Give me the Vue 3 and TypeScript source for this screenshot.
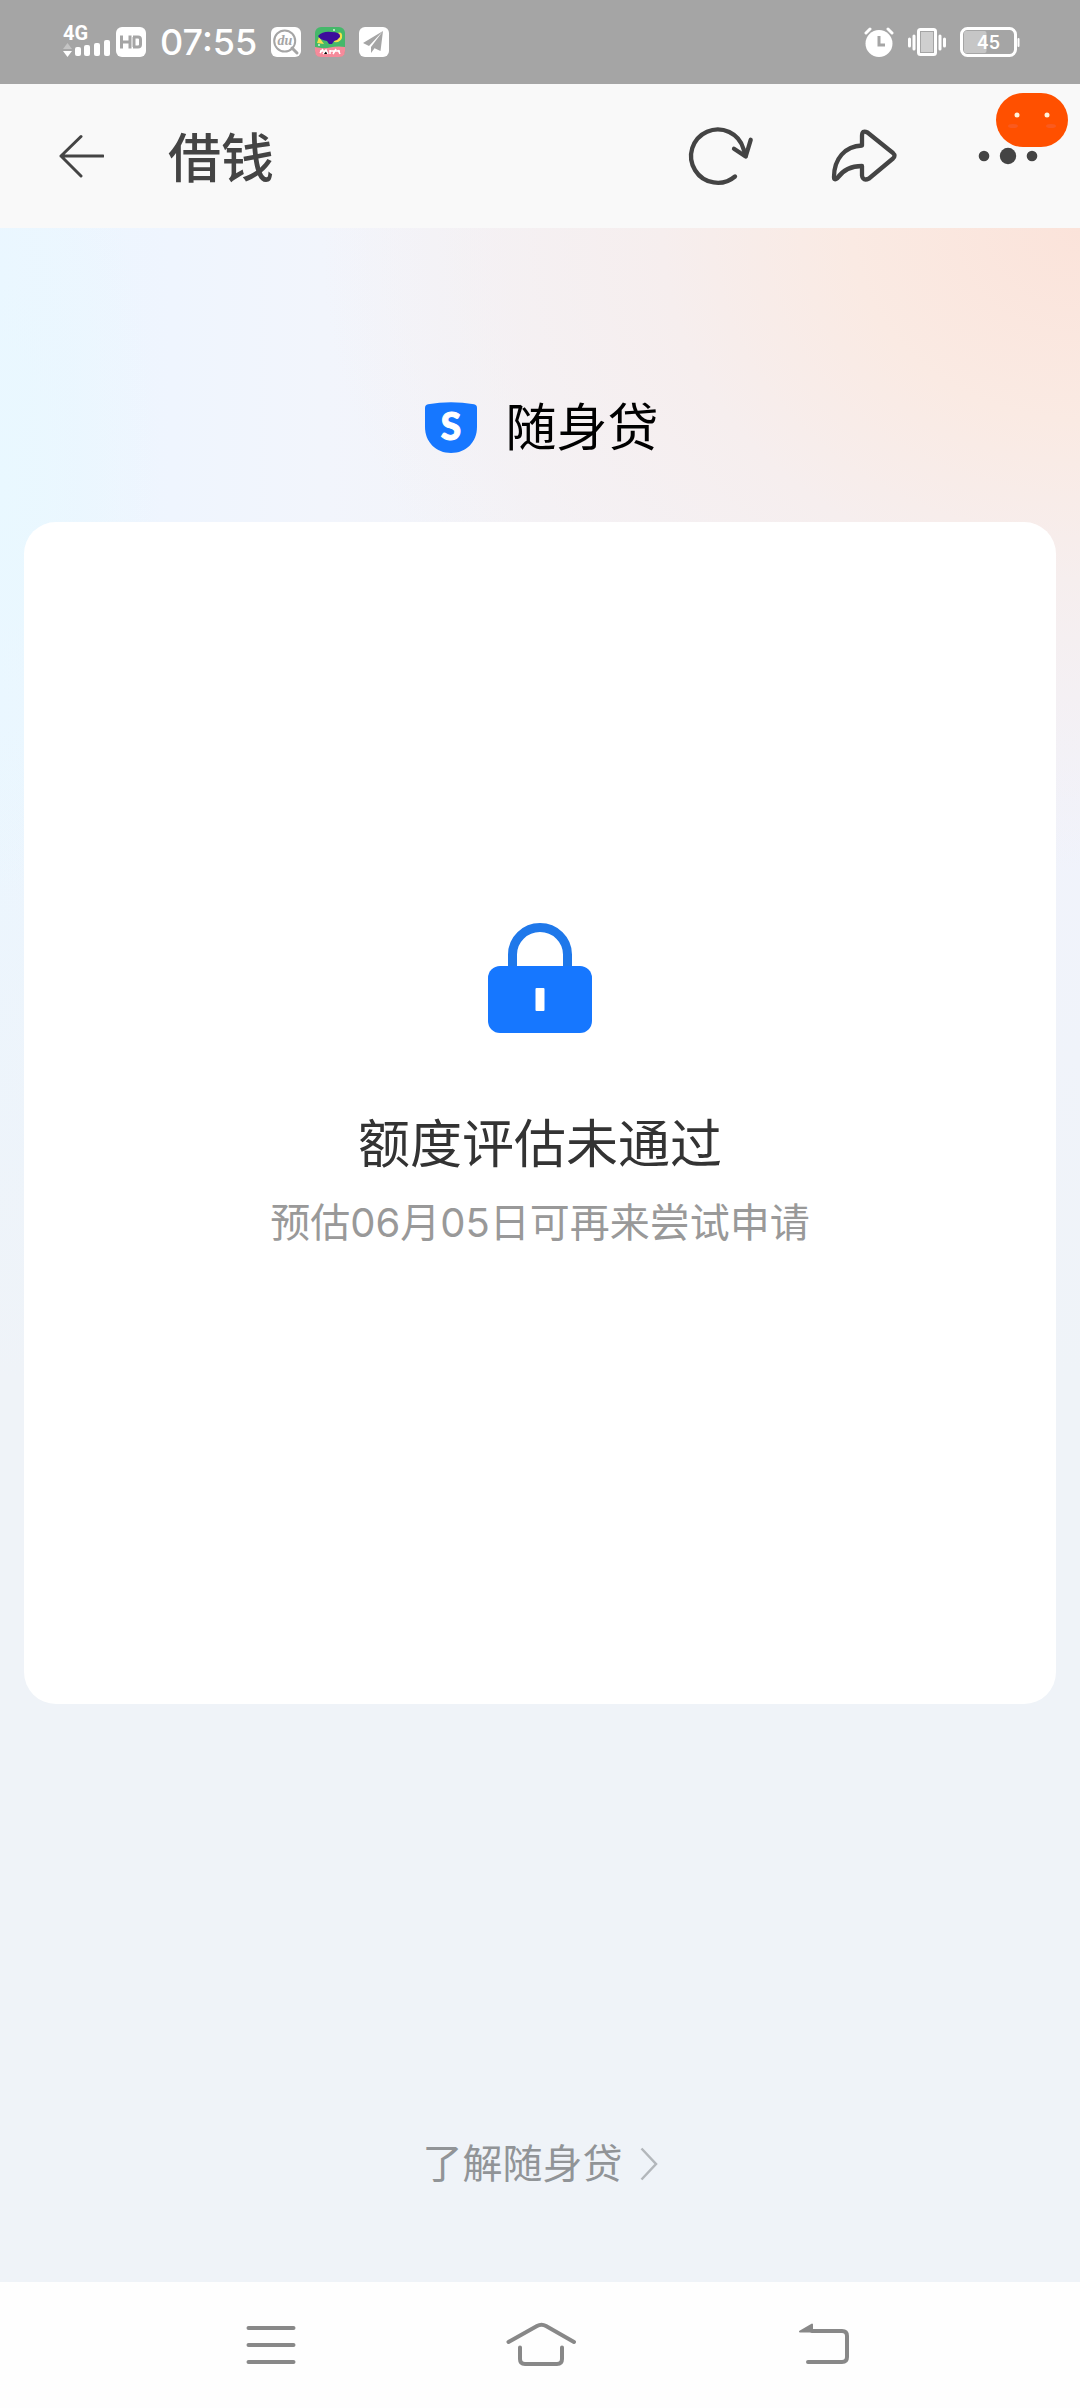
<script setup lang="ts">
import { ref } from 'vue'

const clock = ref('07:55')
const battery = ref(45)
const pageTitle = ref('借钱')
const brand = ref('随身贷')
const result = ref({
  title: '额度评估未通过',
  hint: '预估06月05日可再来尝试申请',
})
const bars = [
  { x: 13, y: 23 },
  { x: 22, y: 21 },
  { x: 32, y: 19 },
  { x: 42, y: 16 },
]
</script>

<template>
  <div class="screen">
    <div class="status">
      <div class="status-group">
        <div class="network">
          <svg class="signal" width="48" height="36" viewBox="0 0 48 36" aria-label="4G">
            <text class="net-type" x="1" y="16">4G</text>
            <path d="M1 25 L5.500 19 L10 25Z" fill="#c4c4c4" />
            <path d="M1 27 H10 L5.500 33Z" fill="#fff" />
            <rect v-for="b in bars" :key="b.x" :x="b.x" :y="b.y" width="6" :height="32 - b.y" rx="2" fill="#fff" />
          </svg>
          <svg width="30" height="30" viewBox="0 0 30 30" aria-label="HD">
            <rect width="30" height="30" rx="6" fill="#fff" />
            <path d="M5.500 8.500V21.500M14 8.500V21.500M5.500 15H14M18 10V20M17 10H22Q24.500 10 24.500 12.500V17.500Q24.500 20 22 20H17" fill="none" stroke="#a5a5a5" stroke-width="3" />
          </svg>
        </div>
        <span class="clock">{{ clock }}</span>
        <svg width="30" height="30" viewBox="0 0 30 30" aria-hidden="true">
          <rect width="30" height="30" rx="6" fill="#fff" />
          <circle cx="13.700" cy="14" r="10.500" fill="none" stroke="#a5a5a5" stroke-width="2" />
          <path d="M21 21L26 26" stroke="#a5a5a5" stroke-width="3" stroke-linecap="round" />
          <text class="du" x="14" y="18" text-anchor="middle">du</text>
        </svg>
        <svg width="30" height="30" viewBox="0 0 30 30" aria-hidden="true">
          <rect width="30" height="30" rx="6" fill="#45b86a" />
          <path d="M0 20Q8 22 15 20.500T30 20V24Q30 30 24 30H6Q0 30 0 24Z" fill="#f58a9b" />
          <path d="M4 10L2 16L9 17ZM22 6Q28 4 27 11Q25 16 19 15Z" fill="#f4e04d" />
          <path d="M3 9Q8 4 16 5Q26 5 25 10Q23 13 19 14L17 17H14L12 14Q5 13 3 9Z" fill="#3d0d9c" />
          <path d="M5 26L8 22M8 27L11 23L13 27M15 23V27M18 27L21 22M23 23L25 27M5 24H12M15 24H25" stroke="#fff" stroke-width="1.500" />
          <circle cx="19" cy="3" r="1" fill="#d8f5df" />
          <circle cx="4" cy="18" r="1" fill="#d8f5df" />
        </svg>
        <svg width="30" height="30" viewBox="0 0 30 30" aria-hidden="true">
          <rect width="30" height="30" rx="6" fill="#fff" />
          <path d="M24 4L4 16L10 19ZM24 4L12 20V26L15 22ZM24 4L15 21L21.500 24Z" fill="#a5a5a5" />
        </svg>
      </div>
      <div class="status-group">
        <svg width="30" height="30" viewBox="0 0 30 30" aria-hidden="true">
          <circle cx="15" cy="16.500" r="13.500" fill="#fff" />
          <path d="M2 6L6 2M28 6L24 2" stroke="#fff" stroke-width="3" stroke-linecap="round" />
          <path d="M15 9V18H21" fill="none" stroke="#a5a5a5" stroke-width="3" />
        </svg>
        <svg width="38" height="30" viewBox="0 0 38 30" aria-hidden="true">
          <rect x="10.500" y="2.500" width="17" height="25" rx="2" fill="#cfcfcf" stroke="#fff" stroke-width="3" />
          <rect x="12.500" y="4.500" width="13" height="21" fill="none" stroke="#a5a5a5" />
          <path d="M1.500 12V19M6 9V22M32 9V22M36.500 12V19" stroke="#fff" stroke-width="3" stroke-linecap="round" />
        </svg>
        <svg width="60" height="30" viewBox="0 0 60 30" :aria-label="`${battery}%`">
          <rect x="4" y="4" :width="battery / 2" height="22" rx="2" fill="#c6c6c6" />
          <rect x="1.500" y="1.500" width="54" height="27" rx="6" fill="none" stroke="#fff" stroke-width="3" />
          <path d="M58.500 12V19" stroke="#fff" stroke-width="2" stroke-linecap="round" />
          <text class="level" x="28.500" y="22" text-anchor="middle">{{ battery }}</text>
        </svg>
      </div>
    </div>

    <header class="bar">
      <button class="icon-btn" type="button" aria-label="返回">
        <svg width="48" height="48" viewBox="0 0 48 48">
          <path d="M25 4.500L5 24L25 44M5 24H47" fill="none" stroke="#444" stroke-width="3" stroke-linecap="round" stroke-linejoin="round" />
        </svg>
      </button>
      <h1 class="title">{{ pageTitle }}</h1>
      <div class="actions">
        <button class="icon-btn" type="button" aria-label="刷新">
          <svg width="72" height="72" viewBox="0 0 72 72" fill="none" stroke="#444" stroke-width="4.300" stroke-linecap="round" stroke-linejoin="round">
            <path d="M51 56.500A26.700 26.700 0 1 1 59.500 29Q61 33 61.500 36" />
            <path d="M50 28.700L61.700 36.500L66.700 19.800" />
          </svg>
        </button>
        <button class="icon-btn" type="button" aria-label="分享">
          <svg width="72" height="72" viewBox="0 0 72 72" fill="none" stroke="#444" stroke-width="4.300" stroke-linejoin="round">
            <path d="M6 57C6 39 17 26 34 25.500V16Q34 9.500 39.500 12.500L65 33Q68 35.700 65 38.500L41 58.500Q35 61.500 34 55.500V46C23 46 15 50 9.500 58Q6 61 6 57Z" />
          </svg>
        </button>
        <button class="icon-btn more" type="button" aria-label="更多">
          <svg width="72" height="72" viewBox="0 0 72 72" fill="#444">
            <circle cx="12" cy="36" r="5.300" />
            <circle cx="36" cy="36" r="8.200" />
            <circle cx="60" cy="36" r="5.300" />
          </svg>
          <span class="badge">
            <svg width="72" height="54" viewBox="0 0 72 54">
              <circle cx="21" cy="22" r="2.500" fill="#fff3dc" />
              <circle cx="51" cy="22" r="2.500" fill="#fff3dc" />
              <ellipse cx="17" cy="33" rx="5" ry="2" fill="#fa5a1e" />
              <ellipse cx="55" cy="33" rx="5" ry="2" fill="#fa5a1e" />
            </svg>
          </span>
        </button>
      </div>
    </header>

    <main class="content">
      <div class="brand">
        <svg width="52" height="52" viewBox="0 0 52 52" aria-hidden="true">
          <path d="M0 6Q0 3 3 2.300Q26 -2 49 2.300Q52 3 52 6V25C52 40 41 51 26 51S0 40 0 25Z" fill="#1677ff" />
          <text class="brand-s" x="26" y="38" text-anchor="middle">S</text>
        </svg>
        <span>{{ brand }}</span>
      </div>

      <section class="card">
        <svg width="104" height="110" viewBox="0 0 104 110" aria-hidden="true">
          <path d="M24.500 48V31.500A27.500 27 0 0 1 79.500 31.500V48" fill="none" stroke="#1f78ea" stroke-width="9" />
          <rect y="43" width="104" height="67" rx="12" fill="#1677ff" />
          <rect x="47.500" y="65" width="9" height="23" rx="1" fill="#fff" />
        </svg>
        <h2 class="result">{{ result.title }}</h2>
        <p class="hint">{{ result.hint }}</p>
      </section>

      <a class="learn" href="#">
        <span>了解随身贷</span>
        <svg width="18" height="34" viewBox="0 0 18 34" aria-hidden="true">
          <path d="M1.500 1.500L16 17L1.500 32.500" fill="none" stroke="#b3b7bb" stroke-width="2.500" />
        </svg>
      </a>
    </main>

    <nav class="nav">
      <button type="button" aria-label="最近任务">
        <svg width="100" height="50" viewBox="0 0 100 50">
          <path d="M28.500 8H73.500M28.500 25H73.500M28.500 42H73.500" />
        </svg>
      </button>
      <button type="button" aria-label="主屏幕">
        <svg width="100" height="50" viewBox="0 0 100 50">
          <path d="M18.500 22L47 6Q51.500 3.500 56 6L84 22" />
          <path d="M30 27.500V39Q30 44 35 44H67Q72 44 72 39V27.500" />
        </svg>
      </button>
      <button type="button" aria-label="返回上一级">
        <svg width="100" height="50" viewBox="0 0 100 50">
          <path d="M52 11H82Q87 11 87 16V37Q87 42 82 42H48" />
          <path class="solid" d="M40 11.500L52 4.500V11.500Z" />
        </svg>
      </button>
    </nav>
  </div>
</template>

<style>
body {
  margin: 0;
}
</style>

<style scoped>
.screen {
  display: flex;
  flex-direction: column;
  min-height: 100vh;
  font-family: Inter, "Noto Sans CJK SC", sans-serif;
  background: #eff3f8;
}

svg {
  display: block;
  flex: none;
}

button {
  padding: 0;
  border: 0;
  background: none;
}

.status {
  display: flex;
  justify-content: space-between;
  align-items: center;
  height: 84px;
  padding: 0 60px 0 62px;
  background: #a5a5a5;
  color: #fff;
}

.status-group {
  display: flex;
  align-items: center;
  gap: 14px;
}

.network {
  display: flex;
  align-items: center;
  gap: 6px;
}

.signal {
  overflow: visible;
}

.net-type {
  font: 700 20px Roboto, sans-serif;
  fill: #fff;
}

.du {
  font: italic 700 14px "Liberation Serif", serif;
  fill: #a5a5a5;
}

.level {
  font: 600 18px Inter, sans-serif;
  fill: #fff;
}

.clock {
  font-size: 36px;
  font-weight: 500;
  line-height: 44px;
}

.bar {
  display: flex;
  align-items: center;
  height: 144px;
  padding: 0 36px 0 56px;
  background: #f9f9f9;
}

.title {
  flex: 1;
  margin: 0 0 0 64px;
  padding-top: 6px;
  font-size: 53px;
  font-weight: 500;
  line-height: 72px;
  color: #444;
}

.actions {
  display: flex;
  gap: 72px;
}

.more {
  position: relative;
}

.badge {
  position: absolute;
  top: -27px;
  left: 24px;
  border-radius: 27px;
  background: #ff5000;
}

.content {
  display: flex;
  flex: 1;
  flex-direction: column;
  padding: 164px 24px 82px;
  background:
    radial-gradient(ellipse 160px 420px at 0 260px, #e9f8ff 0, transparent 100%),
    radial-gradient(ellipse 760px 640px at 100% 0, #fbe3da 0, #faeae3 30%, #f6eeee 55%, transparent 100%),
    linear-gradient(to bottom, transparent 0, transparent 500px, #eff3f8 1150px),
    linear-gradient(to right, #ebf6ff 0, #eff5fe 16%, #f2f5fc 30%, #f3f3f8 50%, #f1f3fc 100%);
}

.brand {
  display: flex;
  justify-content: center;
  align-items: center;
  gap: 28px;
  margin-left: 4px;
  font-size: 51px;
  line-height: 72px;
  color: #000;
}

.brand-s {
  font: 900 37px Lato, sans-serif;
  fill: #fff;
  stroke: #fff;
}

.card {
  display: flex;
  flex-direction: column;
  align-items: center;
  margin-top: 58px;
  padding: 401px 24px 451px;
  border-radius: 32px;
  background: #fff;
}

.result {
  margin: 76px 0 0;
  font-size: 52px;
  font-weight: 400;
  line-height: 72px;
  color: #333;
}

.hint {
  margin: 12px 0 0;
  font-size: 40px;
  line-height: 60px;
  color: #999;
}

.learn {
  display: flex;
  align-items: center;
  align-self: center;
  gap: 17px;
  margin-top: auto;
  font-size: 40px;
  line-height: 72px;
  color: #919497;
  text-decoration: none;
}

.nav {
  display: flex;
  padding: 38px 12.5%;
  background: #fefefe;
}

.nav button {
  display: flex;
  flex: 1;
  justify-content: center;
}

.nav svg {
  fill: none;
  stroke: #888;
  stroke-width: 4px;
  stroke-linecap: round;
}

.nav .solid {
  fill: #888;
  stroke-width: 2px;
  stroke-linejoin: round;
}
</style>
